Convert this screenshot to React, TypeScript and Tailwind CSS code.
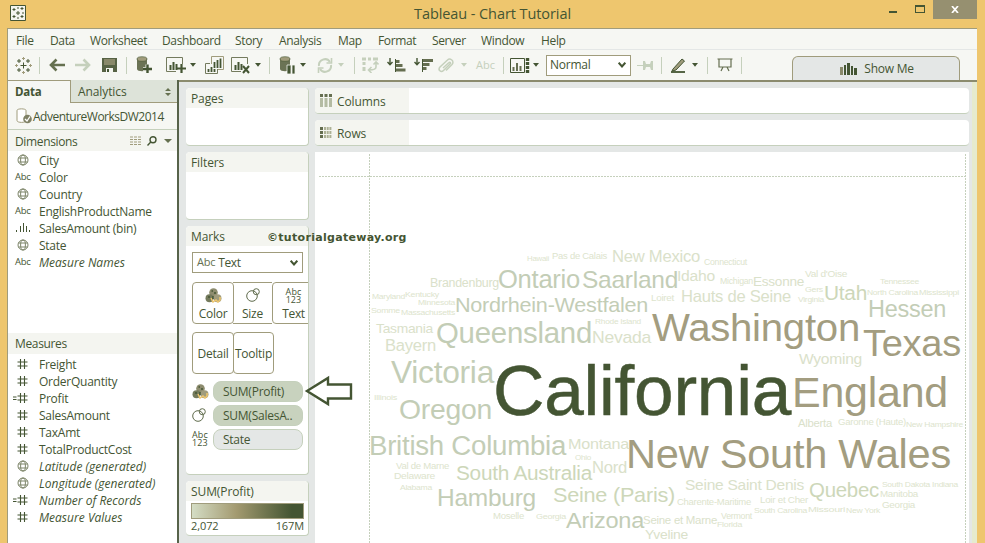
import React from "react";

const INK = "#445533";
const TAN = "#a09c7c";
const PALE = "#c5d0bc";

type Word = [text: string, x: number, baseline: number, width: number, size: number, color: string];

const D = "#445533";
const T = "#a39d80";
const M = "#c3cdb6";
const L = "#cdd7b9";
const S = "#dae1ca";
const XS = "#dde4cd";

const words: Word[] = [
  ["California", 493, 415, 298, 69.5, D],
  ["Washington", 652, 341, 208, 39.4, T],
  ["Texas", 863, 355.5, 98, 36.5, T],
  ["England", 792, 406.7, 156, 42, T],
  ["New South Wales", 626, 467.5, 325, 40.8, T],
  ["Hessen", 868, 316.5, 78, 23, M],
  ["Queensland", 436, 343, 156, 28.8, M],
  ["Ontario", 498, 287.5, 82, 24.9, M],
  ["Saarland", 582, 287.5, 96, 24, M],
  ["Nordrhein-Westfalen", 455, 311.5, 193, 21, M],
  ["Victoria", 391, 382.5, 103, 30.5, M],
  ["Oregon", 399, 418.5, 93, 27.8, M],
  ["British Columbia", 369, 454.5, 197, 27, M],
  ["South Australia", 456, 479.5, 136, 20, L],
  ["Hamburg", 437, 506, 99, 24, M],
  ["Seine (Paris)", 553, 501.5, 122, 21, L],
  ["Arizona", 566, 527.5, 78, 22.8, M],
  ["Quebec", 809, 496.5, 70, 20, L],
  ["Utah", 824, 300, 43, 20, L],
  ["New Mexico", 612, 262, 88, 16.5, S],
  ["Idaho", 677, 280.5, 38, 15.5, S],
  ["Hauts de Seine", 681, 302, 110, 16.5, S],
  ["Brandenburg", 430, 287, 69, 12, S],
  ["Essonne", 753, 285.5, 51, 13, S],
  ["Tasmania", 376, 332.5, 57, 13, S],
  ["Bayern", 385, 350.5, 51, 16, S],
  ["Nevada", 592, 342.5, 59, 17, S],
  ["Wyoming", 799, 364, 63, 15, S],
  ["Montana", 568, 449, 61, 15, S],
  ["Nord", 592, 473, 35, 16.5, S],
  ["Seine Saint Denis", 685, 490, 119, 15, S],
  ["Alberta", 798, 427, 34, 11, S],
  ["Seine et Marne", 643, 523.5, 74, 11, S],
  ["Yveline", 645, 538.5, 43, 13, S],
  ["Hawaii", 527, 261, 22, 7.5, XS],
  ["Pas de Calais", 552, 258.5, 55, 9, XS],
  ["Connecticut", 704, 265, 43, 8.5, XS],
  ["Michigan", 720, 284, 33, 8.5, XS],
  ["Val d'Oise", 805, 277, 42, 9, XS],
  ["Gers", 805, 292, 18, 8, XS],
  ["Virginia", 798, 301.5, 26, 7.5, XS],
  ["Loiret", 651, 301, 23, 8.5, XS],
  ["Tennessee", 880, 284, 39, 8, XS],
  ["North Carolina", 867, 294.5, 51, 8, XS],
  ["Mississippi", 919, 294.5, 40, 8, XS],
  ["Maryland", 372, 299, 33, 8, XS],
  ["Kentucky", 405, 296.5, 34, 8, XS],
  ["Minnesota", 418, 305, 37, 8, XS],
  ["Somme", 371, 313, 29, 8, XS],
  ["Massachusetts", 401, 314.5, 54, 8, XS],
  ["Rhode Island", 595, 324, 46, 8, XS],
  ["Garonne (Haute)", 838, 425, 68, 9, XS],
  ["New Hampshire", 906, 427, 57, 8, XS],
  ["Illinois", 374, 399.5, 23, 8, XS],
  ["Ohio", 575, 459.5, 16, 7.5, XS],
  ["Val de Marne", 396, 469, 53, 9, XS],
  ["Delaware", 394, 479, 41, 8.5, XS],
  ["Alabama", 400, 489.5, 32, 8, XS],
  ["Charente-Maritime", 677, 504.5, 74, 9, XS],
  ["Loir et Cher", 760, 503, 48, 9, XS],
  ["South Carolina", 754, 512.5, 53, 8, XS],
  ["Missouri", 808, 511.5, 37, 8, XS],
  ["New York", 846, 513, 34, 8, XS],
  ["South Dakota Indiana", 882, 487, 76, 8, XS],
  ["Manitoba", 880, 497, 38, 8.5, XS],
  ["Georgia", 882, 507.5, 33, 8.5, XS],
  ["Vermont", 721, 518.5, 31, 8.5, XS],
  ["Florida", 717, 526.5, 25, 8, XS],
  ["Moselle", 493, 519, 31, 8.5, XS],
  ["Georgia", 536, 518.5, 30, 8, XS],
];

function WordCloud() {
  return (
    <svg className="block" width="654" height="391" viewBox="315 152 654 391" fontFamily="'Liberation Sans', Arial, sans-serif">
      <g fill="none" stroke={PALE} shapeRendering="crispEdges">
        <path d="M319 176.5H965" strokeDasharray="2 1" />
        <path d="M369.5 154V543M965.5 154V543" strokeDasharray="2 1" />
      </g>
      {words.map(([t, x, y, w, s, c], i) => (
        <text key={i} x={x} y={y} fontSize={s} textLength={w} lengthAdjust="spacingAndGlyphs" fill={c} stroke={t === "California" ? c : "none"} strokeWidth="0.5">
          {t}
        </text>
      ))}
    </svg>
  );
}

function Globe() {
  return (
    <svg width="12" height="12" viewBox="0 0 12 12" fill="none" stroke="#7d8569">
      <circle cx="6" cy="6" r="5" />
      <ellipse cx="6" cy="6" rx="2.4" ry="5" />
      <path d="M1.5 4H10.5M1.5 8H10.5" />
    </svg>
  );
}

function Hash({ eq }: { eq?: boolean }) {
  return (
    <svg width="16" height="12" viewBox="0 0 16 12" fill="none" stroke={INK} strokeWidth="1.1">
      <path d="M7.5 1V11M11.5 1V11M4.5 4H14.5M4.5 8H14.5" />
      {eq && <path d="M0 5H3.5M0 7.5H3.5" />}
    </svg>
  );
}

function Bins() {
  return (
    <svg width="14" height="9" viewBox="0 0 14 9" stroke={INK} shapeRendering="crispEdges">
      <path d="M.5 7V9M4.5 3V9M7.5 0V9M10.5 3V9M13.5 7V9" />
    </svg>
  );
}

type Kind = "globe" | "abc" | "bin" | "num" | "eqnum";

function Field({ kind, label, italic }: { kind: Kind; label: string; italic?: boolean }) {
  return (
    <div className="flex h-[17px] items-center">
      <div className="flex w-[31px] shrink-0 items-center">
        {kind === "globe" && <div className="pl-[9px]"><Globe /></div>}
        {kind === "abc" && <span className="pl-[7px] text-[9.5px] leading-none">Abc</span>}
        {kind === "bin" && <div className="pl-[8px]"><Bins /></div>}
        {kind === "num" && <div className="pl-[5px]"><Hash /></div>}
        {kind === "eqnum" && <div className="pl-[5px]"><Hash eq /></div>}
      </div>
      <span className={italic ? "pt-[2px] leading-[17px] tracking-[0.02px] whitespace-nowrap italic" : "pt-[2px] leading-[17px] whitespace-nowrap"}>{label}</span>
    </div>
  );
}

function Slot({ className, children }: { className: string; children?: React.ReactNode }) {
  return <div className={"flex h-[20px] shrink-0 items-center " + className}>{children}</div>;
}

function Sep({ className }: { className: string }) {
  return <div className={"h-[17px] w-px shrink-0 bg-[#c5d0bc] " + className} />;
}

function Caret({ className, pale }: { className: string; pale?: boolean }) {
  return (
    <svg className={"shrink-0 " + className} width="6" height="4" viewBox="0 0 6 4">
      <path d="M0 0H6L3 3.7Z" fill={pale ? PALE : INK} />
    </svg>
  );
}

function Sparkle() {
  return (
    <svg width="17" height="17" viewBox="0 0 17 17" fill="none" stroke={INK}>
      <path d="M8.5 5.5V11.5M5.5 8.5H11.5M4 2V6M2 4H6M13 2V6M11 4H15M4 11V15M2 13H6M13 11V15M11 13H15" />
      <path d="M8.5 0V3M7 1.5H10M8.5 14V17M7 15.5H10M1.5 7V10M0 8.5H3M15.5 7V10M14 8.5H17" stroke={TAN} />
    </svg>
  );
}

function Arrow({ flip }: { flip?: boolean }) {
  return (
    <svg width="16" height="14" viewBox="0 0 16 14" fill="none" stroke={flip ? PALE : "#65704f"} strokeWidth="2.6">
      <path d={flip ? "M0 7H13M8.5 1.5L14 7L8.5 12.5" : "M16 7H3M7.5 1.5L2 7L7.5 12.5"} />
    </svg>
  );
}

function Save() {
  return (
    <svg width="15" height="14" viewBox="0 0 15 14">
      <path d="M0 0H15V14H0Z" fill="#566244" />
      <path d="M2 1H13V7H2Z" fill="#89896a" />
      <path d="M4 10H11V14H4Z" fill="#f4f5f0" />
      <path d="M5 11H7V14H5Z" fill={INK} />
    </svg>
  );
}

function Cylinder({ pause }: { pause?: boolean }) {
  return (
    <svg width="17" height="18" viewBox="0 0 17 18">
      <path d="M1 3V13C1 16 11 16 11 13V3Z" fill="#6b7355" />
      <ellipse cx="6" cy="3" rx="5" ry="2.3" fill={TAN} stroke={INK} strokeWidth=".6" />
      {pause ? (
        <path d="M8 9H12V18H8ZM13 9H16V18H13Z" fill={INK} stroke="#f4f5f0" strokeWidth=".8" />
      ) : (
        <path d="M11.5 8.5V17M7 13H16" stroke="#f4f5f0" strokeWidth="4" />
      )}
      {!pause && <path d="M11.5 8.5V17M7 13H16" stroke={INK} strokeWidth="2.4" />}
    </svg>
  );
}

function Sheet({ mark }: { mark?: "plus" | "x" }) {
  return (
    <svg width="21" height="18" viewBox="0 0 21 18" fill="none">
      <path d="M16.5 8V1.5H.5V15.5H10" stroke="#747b5e" />
      <path d="M4.5 9V14M7.5 6V14M10.5 8V14" stroke={INK} strokeWidth="2" />
      {mark === "plus" && <path d="M15.5 8V17M11 12.5H20" stroke={INK} strokeWidth="2.2" />}
      {mark === "x" && <path d="M12 10L18 17M18 10L12 17" stroke={INK} strokeWidth="2" />}
    </svg>
  );
}

function Duplicate() {
  return (
    <svg width="19" height="18" viewBox="0 0 19 18" fill="none">
      <path d="M6.5 8V.5H18.5V13.5H13" stroke={TAN} />
      <path d="M5 7.5H.5V17.5H12.5V13" stroke="#747b5e" />
      <path d="M9.5 6V12M12.5 4V12M15.5 2.5V12M3.5 13V16M6.5 11V16M9.5 13V16" stroke={INK} strokeWidth="1.8" />
    </svg>
  );
}

function Refresh() {
  return (
    <svg width="16" height="15" viewBox="0 0 16 15" fill="none" stroke={PALE} strokeWidth="2">
      <path d="M2 8A6 6 0 0 1 13 4M14 7A6 6 0 0 1 3 11" />
      <path d="M14.5 0V5H9.5M1.5 15V10H6.5" strokeWidth="1.6" />
    </svg>
  );
}

function Swap() {
  return (
    <svg width="17" height="16" viewBox="0 0 17 16" fill="none" stroke={PALE} strokeWidth="2">
      <path d="M0 2H4M6 2H9M11 2H16" strokeWidth="3" />
      <path d="M2 5V8M2 10V14" strokeWidth="3" />
      <path d="M14 5V10C14 12 12 13 7 13M11.5 7.5L14 5L16.5 7.5M9.5 10L6.5 13L9.5 16" strokeWidth="1.6" />
    </svg>
  );
}

function Sort({ desc }: { desc?: boolean }) {
  return (
    <svg width="19" height="15" viewBox="0 0 19 15" fill="none">
      <path d="M3 0V6M.5 4L3 6.8L5.5 4" stroke={INK} strokeWidth="1.4" />
      <path d={desc ? "M8 2.5H19M8 6.5H15.5M8 10.5H12.5" : "M8 3.5H12.5M8 7.5H15.5M8 12H18.5"} stroke="#656e50" strokeWidth="3" />
      <path d="M8.5 1V14" stroke={INK} />
    </svg>
  );
}

function Clip() {
  return (
    <svg width="16" height="15" viewBox="0 0 16 15" fill="none" stroke={PALE} strokeWidth="1.5">
      <path d="M5 10L11 4.5C12 3.5 13 5 12 6L5.5 12.5C3 15-.5 12 2 9L9.5 2C12-.5 17 3 14 6.5L8 12.5" />
    </svg>
  );
}

function Fit() {
  return (
    <svg width="20" height="15" viewBox="0 0 20 15" fill="none" stroke={INK}>
      <path d="M.5.5H14.5V14.5H.5Z" />
      <path d="M3.5 9V13M7 5V13M10.5 8V13" stroke="#656e50" strokeWidth="2" />
      <path d="M17.5 0V15" strokeWidth="3.4" strokeDasharray="3 1" />
    </svg>
  );
}

function Pin() {
  return (
    <svg width="17" height="11" viewBox="0 0 17 11" fill={PALE}>
      <path d="M0 5H6V1H8L9 4H13L14 1H16V10H14L13 7H9L8 10H6V6H0Z" />
    </svg>
  );
}

function Pen() {
  return (
    <svg width="16" height="15" viewBox="0 0 16 15" fill="none" stroke={INK}>
      <path d="M2 11L11 1L13.5 3L5 12L1 13Z" fill={TAN} />
      <path d="M0 14H14" strokeWidth="1.8" />
    </svg>
  );
}

function Easel() {
  return (
    <svg width="16" height="14" viewBox="0 0 16 14" fill="none" stroke="#656e50" strokeWidth="1.2">
      <path d="M.5 1H15.5M2 1V9H14V1M6 9L4 13M10 9L12 13" />
    </svg>
  );
}

function ShowMeBars() {
  return (
    <svg width="17" height="12" viewBox="0 0 17 12" fill={INK}>
      <path d="M0 4H3V12H0Z" fill="#89896a" />
      <path d="M4 2H6V12H4ZM7 0H10V12H7ZM11 3H13V12H11ZM14 5H17V12H14Z" />
    </svg>
  );
}

function Palette() {
  return (
    <svg width="17" height="15" viewBox="0 0 17 15">
      <circle cx="8.5" cy="4.5" r="4.3" fill="#8d8c6e" />
      <circle cx="4.5" cy="10.3" r="4" fill="#747a5c" />
      <circle cx="12.5" cy="10.3" r="4" fill="#a09c7c" />
      <path d="M6 10L8 14L11 12L13 14L15 12V9" stroke="#eec66e" strokeWidth="1.5" fill="none" />
      <path d="M6.5 3H8M9 5H11M3 9H5M8 8V11" stroke={INK} strokeWidth="1.5" />
    </svg>
  );
}

function SizeIcon() {
  return (
    <svg width="14" height="14" viewBox="0 0 14 14" fill="none" stroke="#5f6b4c">
      <circle cx="6" cy="8" r="5.3" />
      <circle cx="10.3" cy="3.7" r="3" />
    </svg>
  );
}

function Abc123() {
  return (
    <span className="flex flex-col text-center text-[9px] leading-[8px] tracking-[0.1px]">
      <span>Abc</span>
      <span>123</span>
    </span>
  );
}

function CardTitle({ children }: { children: React.ReactNode }) {
  return <div className="h-[20px] rounded-t bg-[#f4f5f0] pl-[5px] leading-[21px] tracking-[-0.1px]">{children}</div>;
}

const cardCls = "shrink-0 overflow-hidden rounded border-r border-b border-[#c5d0bc] bg-white ";

function Pill({ icon, label, plain }: { icon: React.ReactNode; label: string; plain?: boolean }) {
  return (
    <div className="flex h-[24px] items-center">
      <div className="flex w-[27px] items-center pl-[6px]">{icon}</div>
      <div className={"h-[21px] w-[90px] rounded-[8px] border border-[#c5d0bc] pl-[9px] leading-[20px] " + (plain ? "bg-[#e4e7e6]" : "bg-[#c8d2be]")}>
        {label}
      </div>
    </div>
  );
}

function Shelf({ label, rows }: { label: string; rows?: boolean }) {
  return (
    <div className="flex h-[26px] shrink-0 overflow-hidden rounded border-b border-[#c5d0bc] bg-white">
      <div className="flex w-[94px] items-center gap-[5px] bg-[#f4f5f0] pl-[5px]">
        <svg width="12" height="13" viewBox="0 0 12 13" fill="none" strokeWidth="3">
          {rows ? (
            <g>
              <path d="M0 2.5H3M0 6.5H3M0 10.5H3" stroke="#656e50" />
              <path d="M4 2.5H12M4 6.5H12M4 10.5H12" stroke="#adb195" strokeDasharray="2 .7" />
            </g>
          ) : (
            <g>
              <path d="M1.5 0V3M6 0V3M10.5 0V3" stroke="#656e50" />
              <path d="M1.5 4V13M6 4V13M10.5 4V13" stroke="#b4bba3" />
            </g>
          )}
        </svg>
        <span className="pt-[2px] tracking-[-0.1px]">{label}</span>
      </div>
    </div>
  );
}

const menus: [string, string][] = [
  ["File", "w-[34px]"],
  ["Data", "w-[40px]"],
  ["Worksheet", "w-[72px]"],
  ["Dashboard", "w-[73px]"],
  ["Story", "w-[44px]"],
  ["Analysis", "w-[59px]"],
  ["Map", "w-[40px]"],
  ["Format", "w-[54px]"],
  ["Server", "w-[49px]"],
  ["Window", "w-[60px]"],
  ["Help", "w-[40px]"],
];

export default function App() {
  return (
    <div className="relative flex h-[543px] w-[985px] flex-col overflow-hidden bg-[#eec66e] font-['Open_Sans','Noto_Sans',sans-serif] text-[12px] tracking-[-0.25px] text-[#445533]">
      {/* Title bar */}
      <header className="flex h-[28px] shrink-0 items-start">
        <svg className="mt-[5px] ml-[10px]" width="16" height="16" viewBox="0 0 16 16">
          <path d="M.5.5H15.5V15.5H.5Z" fill="#f4f5f0" stroke={INK} />
          <path d="M8 6V10M6 8H10M4 3V6M2.5 4.5H5.5M12 2V5M10.5 3.5H13.5M4 10V13M2.5 11.5H5.5M12 10V13M10.5 11.5H13.5M8 2V4M8 12V14M13 7V9" stroke={INK} fill="none" />
        </svg>
        <h1 className="ml-[388px] w-[170px] text-[14.5px] leading-[27px] tracking-[-0.08px] whitespace-nowrap">Tableau - Chart Tutorial</h1>
        <div className="ml-auto flex">
          <div className="mt-[11px] mr-[18px] h-[2px] w-[8px] bg-[#445533]" />
          <div className="mt-[5px] mr-[8px] h-[8px] w-[10px] border border-t-2 border-[#445533]" />
          <div className="mr-[8px] flex h-[19px] w-[44px] items-center justify-center bg-[#969070]">
            <svg width="8" height="7" viewBox="0 0 8 7" stroke="#fff" strokeWidth="1.7"><path d="M1 0L7 7M7 0L1 7" /></svg>
          </div>
        </div>
      </header>

      <div className="mr-[8px] ml-[7px] flex min-h-0 flex-1 flex-col border-t border-l border-[#a09c7c] bg-[#f6f7f3]">
        <nav className="flex h-[21px] shrink-0 items-center border-b border-[#e4e7e6] pt-[3px] pl-[8px] tracking-[-0.35px]">
          {menus.map(([m, w]) => (
            <span key={m} className={"shrink-0 whitespace-nowrap " + w}>{m}</span>
          ))}
        </nav>

        {/* Toolbar */}
        <div className="flex h-[30px] shrink-0 items-center">
          <Slot className="ml-[7px] w-[17px]"><Sparkle /></Slot>
          <Sep className="ml-[7px]" />
          <Slot className="ml-[9px] w-[16px]"><Arrow /></Slot>
          <Slot className="ml-[10px] w-[16px]"><Arrow flip /></Slot>
          <Slot className="ml-[11px] w-[16px]"><Save /></Slot>
          <Sep className="ml-[8px]" />
          <Slot className="ml-[9px] w-[17px]"><Cylinder /></Slot>
          <Slot className="ml-[13px] w-[21px]"><Sheet mark="plus" /></Slot>
          <Caret className="ml-[3px]" />
          <Slot className="ml-[9px] w-[19px]"><Duplicate /></Slot>
          <Slot className="ml-[7px] w-[21px]"><Sheet mark="x" /></Slot>
          <Caret className="ml-[3px]" />
          <Sep className="ml-[8px]" />
          <Slot className="ml-[9px] w-[17px]"><Cylinder pause /></Slot>
          <Caret className="ml-[4px]" />
          <Slot className="ml-[11px] w-[16px]"><Refresh /></Slot>
          <Caret pale className="ml-[5px]" />
          <Sep className="ml-[10px]" />
          <Slot className="ml-[7px] w-[17px]"><Swap /></Slot>
          <Slot className="ml-[8px] w-[19px]"><Sort /></Slot>
          <Slot className="ml-[8px] w-[19px]"><Sort desc /></Slot>
          <Slot className="ml-[5px] w-[16px]"><Clip /></Slot>
          <Caret pale className="ml-[7px]" />
          <Slot className="ml-[9px] w-[22px] text-[11px] tracking-[0px] text-[#c5d0bc]">Abc</Slot>
          <Sep className="ml-[5px]" />
          <Slot className="ml-[6px] w-[21px]"><Fit /></Slot>
          <Caret className="ml-[2px]" />
          <div className="ml-[7px] flex h-[21px] w-[85px] shrink-0 items-center justify-between border border-[#a09c7c] bg-white pr-[4px] pl-[3px]">
            <span>Normal</span>
            <svg width="8" height="6" viewBox="0 0 8 6" fill="none" stroke={INK} strokeWidth="2"><path d="M.7.7L4 4.5L7.3.7" /></svg>
          </div>
          <Slot className="ml-[6px] w-[17px]"><Pin /></Slot>
          <Sep className="ml-[7px]" />
          <Slot className="ml-[9px] w-[16px]"><Pen /></Slot>
          <Caret className="ml-[5px]" />
          <Sep className="ml-[9px]" />
          <Slot className="ml-[9px] w-[16px]"><Easel /></Slot>
          <Sep className="ml-[8px]" />
          <button className="ml-[50px] flex h-[24px] w-[168px] shrink-0 items-center justify-center gap-[7px] self-end rounded-t-[6px] border border-b-0 border-[#a09c7c] bg-[#e4e7e6] pt-[1px] pl-[2px]">
            <ShowMeBars />
            <span>Show Me</span>
          </button>
        </div>

        <div className="flex min-h-0 flex-1">
          {/* Data pane */}
          <aside className="flex w-[171px] shrink-0 flex-col border-r-2 border-[#57634a] bg-white">
            <div className="flex h-[23px] shrink-0 bg-[#f6f7f3]">
              <div className="w-[62px] border-t border-[#a09c7c] pl-[7px] text-[11.5px] leading-[22px] font-bold">Data</div>
              <div className="flex flex-1 items-center justify-between border-b border-l border-[#a09c7c] bg-[#dde3d9] pt-[2px] pr-[6px] pl-[7px]">
                <span className="tracking-[-0.1px]">Analytics</span>
                <svg width="6" height="8" viewBox="0 0 6 8" fill="#65704f"><path d="M0 3L3 0L6 3ZM0 5H6L3 8Z" /></svg>
              </div>
            </div>
            <div className="flex h-[27px] shrink-0 items-center border-b border-[#c5d0bc] bg-[#f6f7f3] pl-[8px]">
              <svg className="mr-[1px] shrink-0" width="16" height="16" viewBox="0 0 16 16" fill="none">
                <path d="M1 2.5V12.5C1 15 10 15 10 12.5V2.5C10 .3 1 .3 1 2.5Z" fill="#fff" stroke={TAN} />
                <circle cx="11.5" cy="11" r="4.3" fill="#7f8165" />
                <path d="M9 11L11 13L14 8.5" stroke="#fff" strokeWidth="1.3" />
              </svg>
              <span className="pt-[2px] tracking-[-0.5px] whitespace-nowrap">AdventureWorksDW2014</span>
            </div>
            <div className="flex h-[21px] shrink-0 items-center bg-[#f4f5f0] pl-[7px]">
              <span className="pt-[2px] tracking-[-0.35px]">Dimensions</span>
              <svg className="ml-auto" width="12" height="9" viewBox="0 0 12 9" stroke={TAN} fill="none"><path d="M0 1H12M0 3.5H12M0 6H12M0 8.5H12" strokeDasharray="3 1" /></svg>
              <svg className="ml-[5px]" width="10" height="10" viewBox="0 0 10 10" stroke={INK} fill="none" strokeWidth="1.4"><circle cx="6" cy="3.7" r="3" /><path d="M3.8 6L.5 9.5" /></svg>
              <svg className="mr-[5px] ml-[7px]" width="8" height="4" viewBox="0 0 8 4"><path d="M0 0H8L4 4Z" fill="#65704f" /></svg>
            </div>
            <div className="h-[182px] shrink-0">
              <Field kind="globe" label="City" />
              <Field kind="abc" label="Color" />
              <Field kind="globe" label="Country" />
              <Field kind="abc" label="EnglishProductName" />
              <Field kind="bin" label="SalesAmount (bin)" />
              <Field kind="globe" label="State" />
              <Field kind="abc" label="Measure Names" italic />
            </div>
            <div className="mb-[1px] h-[21px] shrink-0 bg-[#f4f5f0] pl-[7px] leading-[22px] tracking-[-0.35px]">Measures</div>
            <Field kind="num" label="Freight" />
            <Field kind="num" label="OrderQuantity" />
            <Field kind="eqnum" label="Profit" />
            <Field kind="num" label="SalesAmount" />
            <Field kind="num" label="TaxAmt" />
            <Field kind="num" label="TotalProductCost" />
            <Field kind="globe" label="Latitude (generated)" italic />
            <Field kind="globe" label="Longitude (generated)" italic />
            <Field kind="eqnum" label="Number of Records" italic />
            <Field kind="num" label="Measure Values" italic />
          </aside>

          <div className="flex min-w-0 flex-1 border-t-2 border-[#8b8b6e] bg-[#e4e7e6] pt-[6px] pl-[7px]">
            {/* Cards */}
            <section className="flex w-[123px] shrink-0 flex-col">
              <div className={cardCls + "mb-[6px] h-[58px]"}><CardTitle>Pages</CardTitle></div>
              <div className={cardCls + "mb-[6px] h-[68px]"}><CardTitle>Filters</CardTitle></div>
              <div className={cardCls + "mb-[6px] h-[249px]"}>
                <CardTitle>Marks</CardTitle>
                <div className="mt-[6px] ml-[6px] flex h-[21px] w-[111px] items-center border border-[#a09c7c] pr-[4px] pl-[4px]">
                  <span className="text-[11px] text-[#65704f]">Abc</span>
                  <span className="ml-[3px] pt-[1px] tracking-[-0.4px]">Text</span>
                  <svg className="ml-auto" width="8" height="6" viewBox="0 0 8 6" fill="none" stroke={INK} strokeWidth="2"><path d="M.7.7L4 4.5L7.3.7" /></svg>
                </div>
                <div className="mt-[9px] ml-[6px] flex h-[42px] w-[124px]">
                  <div className="flex w-[42px] shrink-0 flex-col items-center justify-between rounded border border-[#a09c7c] pt-[5px]"><Palette /><span className="leading-[18px]">Color</span></div>
                  <div className="-ml-px flex w-[39px] shrink-0 flex-col items-center justify-between border-y border-[#a09c7c] pt-[5px]"><SizeIcon /><span className="leading-[18px]">Size</span></div>
                  <div className="flex w-[43px] shrink-0 flex-col items-center justify-between rounded-l border border-[#a09c7c] pt-[5px]"><Abc123 /><span className="leading-[18px] tracking-[-0.4px]">Text</span></div>
                </div>
                <div className="mt-[8px] ml-[6px] flex h-[42px]">
                  <div className="flex w-[42px] items-center justify-center rounded border border-[#a09c7c] pt-[2px]">Detail</div>
                  <div className="-ml-px flex w-[41px] items-center justify-center rounded border border-[#a09c7c] pt-[2px]">Tooltip</div>
                </div>
                <div className="mt-[5px]">
                  <Pill icon={<Palette />} label="SUM(Profit)" />
                  <Pill icon={<SizeIcon />} label="SUM(SalesA.." />
                  <Pill icon={<Abc123 />} label="State" plain />
                </div>
              </div>
              <div className={cardCls + "h-[55px]"}>
                <CardTitle>SUM(Profit)</CardTitle>
                <div className="mt-[2px] ml-[5px] h-[16px] w-[113px] border border-[#a09c7c] bg-linear-to-r from-[#d4ddc5] via-[#a39a70] via-40% to-[#445533] to-90%" />
                <div className="mr-[4px] ml-[5px] flex justify-between text-[11px] leading-[14px] tracking-[-0.1px]"><span>2,072</span><span>167M</span></div>
              </div>
            </section>

            {/* Shelves and view */}
            <main className="ml-[6px] flex w-[654px] shrink-0 flex-col">
              <Shelf label="Columns" />
              <div className="h-[6px] shrink-0" />
              <Shelf label="Rows" rows />
              <div className="mt-[6px] flex-1 bg-white"><WordCloud /></div>
            </main>
            <div className="ml-auto -mt-[6px] w-[5px] bg-[#e6ebce]" />
          </div>
        </div>
      </div>

      {/* Annotations laid over the window */}
      <svg className="absolute top-[375px] left-[304px]" width="50" height="32" viewBox="0 0 50 32">
        <path d="M3 16L24 3V9.5H47V23.5H24V29Z" fill="#fff" stroke={INK} strokeWidth="2.4" />
      </svg>
      <div className="absolute top-[230px] left-[267px] font-['DejaVu_Sans',sans-serif] text-[11px] leading-[16px] font-bold tracking-[0.3px] whitespace-nowrap">©tutorialgateway.org</div>
    </div>
  );
}
